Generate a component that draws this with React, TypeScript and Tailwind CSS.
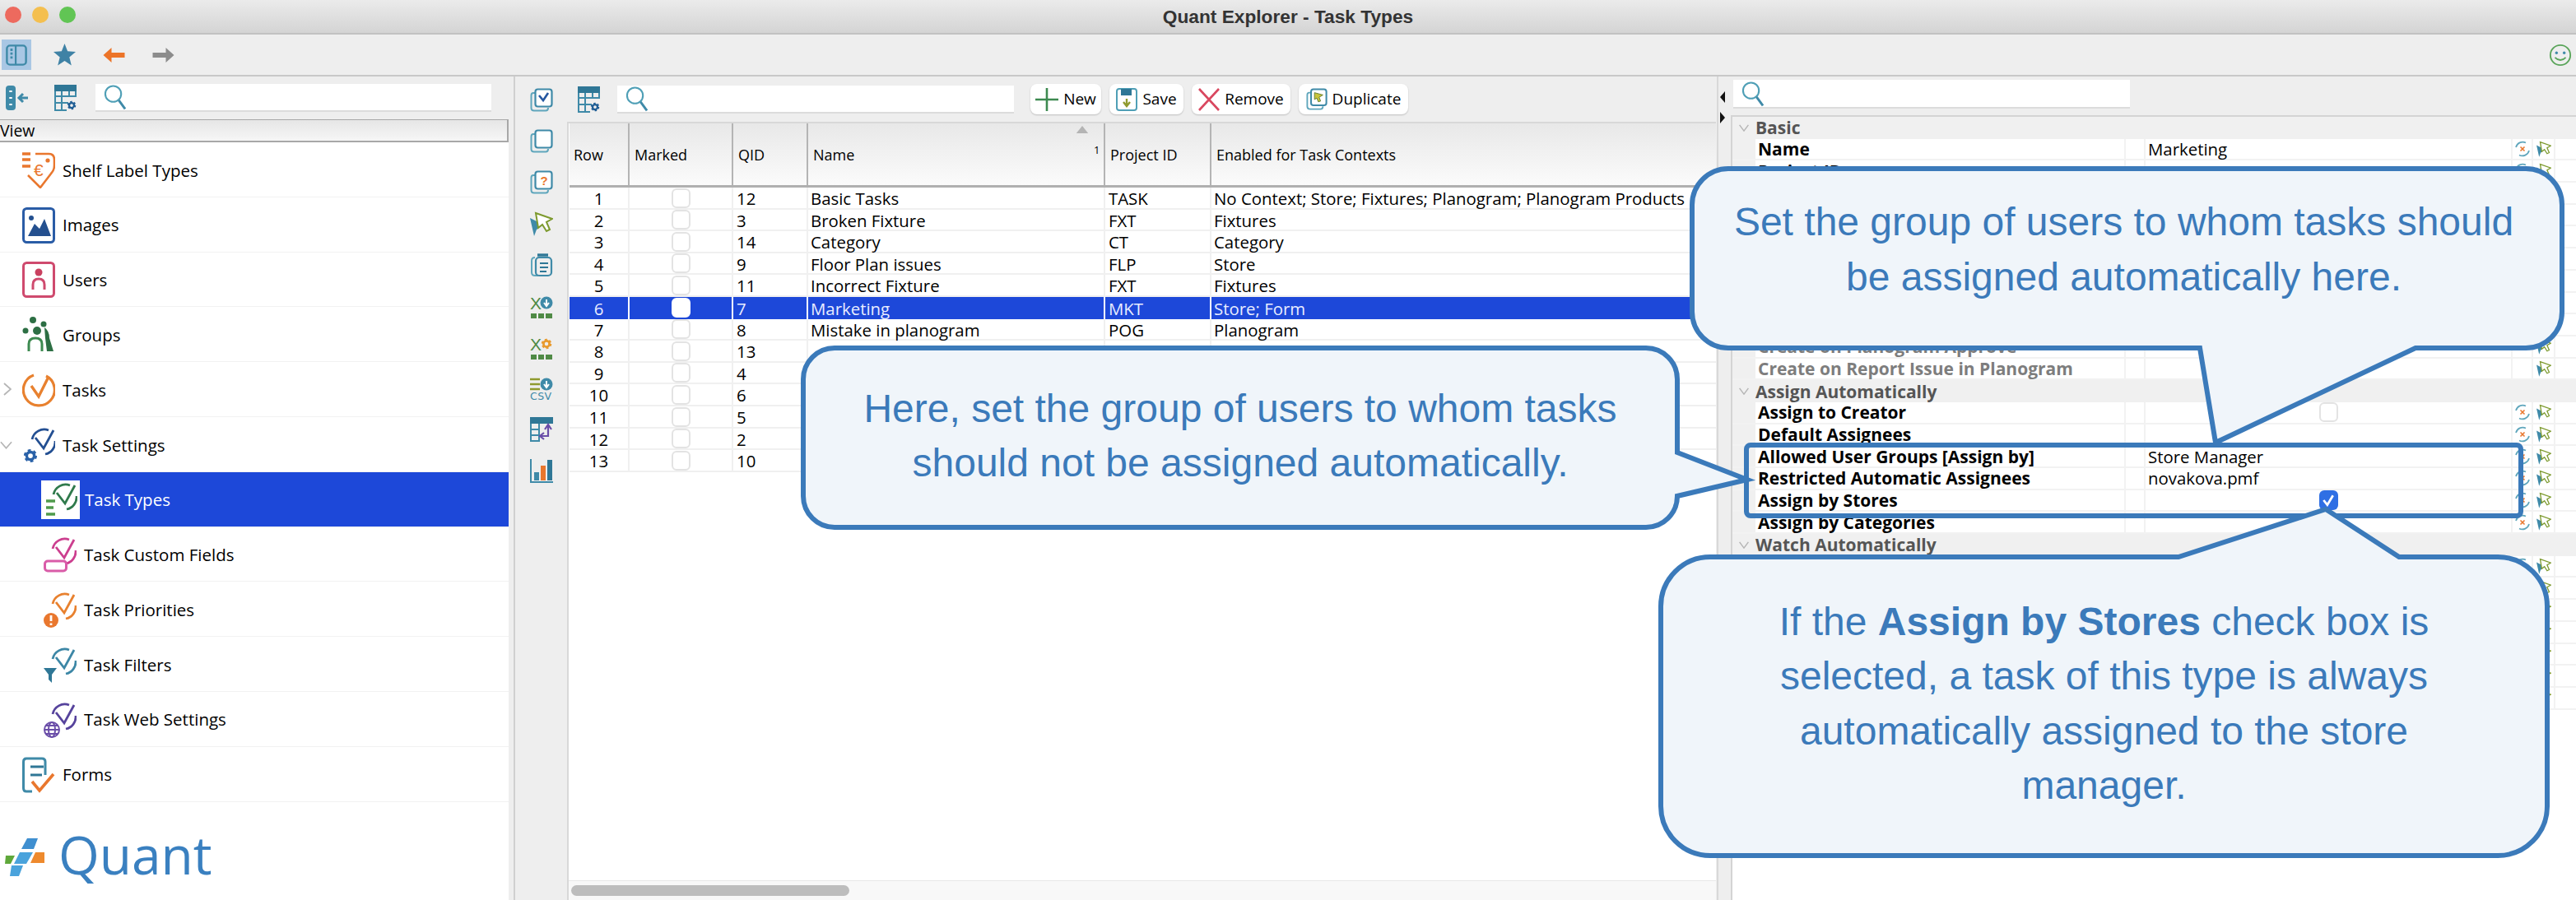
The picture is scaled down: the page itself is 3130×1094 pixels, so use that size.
import * as React from "react";

const TEAL = "#3f8aa8";
const DEEP = "#2f7796";

function ArcCheck({ color, check }: { color: string; check?: string }) {
  return (
    <g fill="none" stroke={color} strokeWidth="2.8">
      <path d="M11 15 A15 15 0 0 1 31 4" />
      <path d="M39 17 A15 15 0 0 1 27 33" />
      <path d="M15 13 L25 26 L37 4" stroke={check ?? color} />
    </g>
  );
}

function Gear({ cx, cy, r, color }: { cx: number; cy: number; r: number; color: string }) {
  return (
    <g fill="none" stroke={color}>
      <circle cx={cx} cy={cy} r={r} strokeWidth={r * 0.75} />
      <circle cx={cx} cy={cy} r={r * 1.45} strokeWidth={r * 0.6} strokeDasharray={`${r * 0.8} ${r * 0.72}`} />
    </g>
  );
}

function TreeIcon({ name }: { name: string }) {
  return (
    <svg viewBox="0 0 40 44" className="w-[40px] h-[44px] flex-none">
      {name === "shelf" && (
        <g fill="none" stroke="#e9772e" strokeWidth="2.6">
          <path d="M0 2 H10 M0 9 H10 M0 17 H10" strokeWidth="3.4" />
          <path d="M16 2 H32 Q39 2 39 9 V16 Q39 22 35 26 L22 43 L7 28" />
          <circle cx="31" cy="10" r="2.6" fill="#e9772e" stroke="none" />
          <text x="14" y="29" fontSize="21" fontFamily="Liberation Sans, sans-serif" fill="#e9772e" stroke="none">€</text>
        </g>
      )}
      {name === "images" && (
        <g>
          <rect x="1.5" y="1.5" width="37" height="41" rx="4" fill="none" stroke="#2a5ca6" strokeWidth="3" />
          <circle cx="11" cy="13" r="3" fill="#24508f" />
          <path d="M7 35 L15 20 L21 26 L27 14 L35 35 Z" fill="#24508f" />
        </g>
      )}
      {name === "users" && (
        <g>
          <rect x="1.5" y="1.5" width="37" height="41" rx="4" fill="none" stroke="#cf4a6e" strokeWidth="3" />
          <circle cx="20" cy="13" r="4.5" fill="#c9405f" />
          <path d="M13 34 V28 Q13 21 20 21 Q27 21 27 28 V34" fill="none" stroke="#cf4a6e" strokeWidth="3" />
        </g>
      )}
      {name === "groups" && (
        <g>
          <circle cx="13" cy="4" r="4" fill="#2d6f44" />
          <circle cx="4" cy="17" r="3.5" fill="#2d6f44" />
          <circle cx="18" cy="17" r="5" fill="#2d6f44" />
          <circle cx="26" cy="9" r="3.5" fill="#2d6f44" />
          <path d="M8 42 V33 Q8 26 16 26 Q24 26 24 33 V42" fill="none" stroke="#3d8a50" strokeWidth="3" />
          <path d="M27 13 Q33 17 33 26 L38 42 H30 L28 26 Z" fill="#2d6f44" />
        </g>
      )}
      {name === "tasks" && (
        <g fill="none" stroke="#e8812f" strokeWidth="3.2">
          <path d="M14 4 A19 19 0 1 0 29 5" />
          <path d="M11 17 L20 30 L32 6" strokeWidth="3.4" />
        </g>
      )}
      {name === "settings" && (
        <g transform="translate(1 0)">
          <ArcCheck color="#234f92" />
          <Gear cx={9} cy={35} r={4.6} color="#2a62a8" />
        </g>
      )}
      {name === "types" && (
        <g>
          <ArcCheck color="#2f7a4c" />
          <path d="M2 23 H13 M2 31 H11 M2 39 H13" stroke="#4f9a4c" strokeWidth="3.6" />
        </g>
      )}
      {name === "custom" && (
        <g>
          <ArcCheck color="#cc3f8f" />
          <rect x="1.5" y="30" width="26" height="12" rx="3.5" fill="#fff" stroke="#d95ca8" strokeWidth="3" />
        </g>
      )}
      {name === "priorities" && (
        <g>
          <ArcCheck color="#e8812f" />
          <circle cx="9" cy="35" r="9" fill="#e9772e" />
          <path d="M9 29 V36 M9 38.5 V41" stroke="#fff" strokeWidth="2.8" />
        </g>
      )}
      {name === "filters" && (
        <g>
          <ArcCheck color="#3d87a6" />
          <path d="M0 26 H16 L10 34 V44 L6 40 V34 Z" fill="#2f7796" />
        </g>
      )}
      {name === "web" && (
        <g>
          <ArcCheck color="#56439c" />
          <g fill="#fff" stroke="#6a4da8" strokeWidth="2">
            <circle cx="10" cy="34" r="9" />
            <ellipse cx="10" cy="34" rx="4" ry="9" />
            <path d="M1 34 H19 M2 29 H18 M2 39 H18" />
          </g>
        </g>
      )}
      {name === "forms" && (
        <g fill="none">
          <path d="M28 22 V6 Q28 2 24 2 H5 Q1.5 2 1.5 6 V38 Q1.5 42 5 42 H12" stroke="#3f8aa8" strokeWidth="3" />
          <path d="M10 12 H26 M10 22 H24" stroke="#2f7796" strokeWidth="3" />
          <path d="M12 30 L21 41 L38 21" stroke="#e9772e" strokeWidth="3.6" />
        </g>
      )}
    </svg>
  );
}

function Search() {
  return (
    <svg viewBox="0 0 28 32" className="w-[27px] h-[32px] flex-none">
      <g fill="none">
        <circle cx="12" cy="12" r="10" stroke="#4f9fb6" strokeWidth="2.2" />
        <path d="M19 20 L27 31" stroke="#3f8aa8" strokeWidth="3" />
      </g>
    </svg>
  );
}

function TableGear() {
  return (
    <svg viewBox="0 0 28 32" className="w-[28px] h-[32px] flex-none">
      <rect x="0" y="0" width="27" height="8" fill="#2f7796" />
      <path d="M1 8 V31 H15 M1 14 H26 M1 22 H17 M9 8 V31 M18 8 V15 M26 8 V15" fill="none" stroke="#3f8aa8" strokeWidth="2" />
      <Gear cx={21} cy={25} r={3} color="#1f5d94" />
    </svg>
  );
}

function CopyBox({ children }: { children?: React.ReactNode }) {
  return (
    <g fill="none">
      <path d="M6 6 H4 Q1.5 6 1.5 9 V24 Q1.5 27.5 5 27.5 H19 Q22 27.5 22 24" stroke="#5fa6bc" strokeWidth="2" />
      <rect x="6.5" y="1.5" width="20" height="21" rx="3" stroke={TEAL} strokeWidth="2.2" fill="#fff" />
      {children}
    </g>
  );
}

function Cursor({ className }: { className: string }) {
  return (
    <svg viewBox="0 0 28 30" className={className}>
      <path d="M0 8 L16 16 L8 22 L5 30 Z" fill="#3f8aa8" />
      <path d="M7 2 L27 9 L20 13 L24 22 L20 24 L15 16 L10 20 Z" fill="#fff" stroke="#7d9a2e" strokeWidth="2" />
    </svg>
  );
}

function Squares() {
  return <path d="M1 24 H8 V30 H1 Z M10 24 H17 V30 H10 Z M19 24 H27 V30 H19 Z" fill="#4f8a45" />;
}

function DownDisc({ x, y }: { x: number; y: number }) {
  return (
    <g>
      <circle cx={x} cy={y} r="7.5" fill={TEAL} />
      <path d={`M${x} ${y - 4} V${y + 3} M${x - 3} ${y} L${x} ${y + 4} L${x + 3} ${y}`} stroke="#fff" strokeWidth="2" fill="none" />
    </g>
  );
}

function RailIcon({ name }: { name: string }) {
  if (name === "flag") return <Cursor className="w-[28px] h-[30px] flex-none" />;
  return (
    <svg viewBox="0 0 28 30" className="w-[28px] h-[30px] flex-none overflow-visible">
      {name === "check" && (
        <CopyBox>
          <path d="M11 9 L16 15 L22 6" stroke="#2557a0" strokeWidth="2.6" />
        </CopyBox>
      )}
      {name === "copy" && <CopyBox />}
      {name === "question" && (
        <CopyBox>
          <text x="12.5" y="18" fontSize="15" fontWeight="700" fontFamily="Liberation Sans, sans-serif" fill="#e9772e">?</text>
        </CopyBox>
      )}
      {name === "clip" && (
        <g fill="none">
          <path d="M6 6 Q2 6 2 10 V24 Q2 28 6 28 H10" stroke="#5fa6bc" strokeWidth="2" />
          <rect x="7" y="6" width="19" height="22" rx="4" stroke={TEAL} strokeWidth="2.2" />
          <path d="M9 3 H22" stroke="#2f7796" strokeWidth="3.4" />
          <path d="M12 13 H22 M12 18 H22 M12 23 H20" stroke={DEEP} strokeWidth="2" />
        </g>
      )}
      {name === "xdown" && (
        <g>
          <text x="0" y="19" fontSize="21" fontFamily="Liberation Sans, sans-serif" fill="#4f8a45">X</text>
          <DownDisc x={20} y={11} />
          <Squares />
        </g>
      )}
      {name === "xgear" && (
        <g>
          <text x="0" y="19" fontSize="21" fontFamily="Liberation Sans, sans-serif" fill="#4f8a45">X</text>
          <Gear cx={20} cy={11} r={3.6} color="#e89a2e" />
          <Squares />
        </g>
      )}
      {name === "csv" && (
        <g>
          <path d="M0 4 H12 M0 10 H12 M0 16 H12" stroke="#8f9a2e" strokeWidth="2.6" />
          <DownDisc x={20} y={10} />
          <text x="0" y="29" fontSize="12.5" fontFamily="DejaVu Sans, sans-serif" letterSpacing="0.4" fill="#3f8aa8">CSV</text>
        </g>
      )}
      {name === "swap" && (
        <g fill="none">
          <rect x="0" y="0" width="28" height="8" fill={DEEP} />
          <path d="M1 8 V29 H11 V8 M1 15 H11 M1 22 H11" stroke={TEAL} strokeWidth="2" />
          <path d="M22 10 V23 H13 M18 15 L22 9 L26 15 M17 19 L12 23 L17 27" stroke="#6a4da8" strokeWidth="2.2" />
        </g>
      )}
      {name === "chart" && (
        <g>
          <path d="M1 1 V29 H28" fill="none" stroke={TEAL} strokeWidth="2" />
          <rect x="5" y="17" width="6" height="10" fill={TEAL} />
          <rect x="13" y="9" width="6" height="18" fill="#e9772e" />
          <rect x="21" y="2" width="6" height="25" fill={DEEP} />
        </g>
      )}
    </svg>
  );
}

function Revert() {
  return (
    <svg viewBox="0 0 18 24" className="w-[18px] h-[24px]">
      <g fill="none" stroke="#5fa6bc" strokeWidth="1.7">
        <path d="M1 10 A8.5 8.5 0 0 1 13 4.5" />
        <path d="M17 14 A8.5 8.5 0 0 1 5 19.5" />
      </g>
      <path d="M6.5 9.5 L11.5 14.5 M11.5 9.5 L6.5 14.5" stroke="#e9772e" strokeWidth="1.6" />
    </svg>
  );
}

function SmallCheck({ active }: { active?: boolean }) {
  return (
    <div className={`w-[23px] h-[24px] rounded-[6px] border-2 ${active ? "bg-white border-white" : "bg-white border-[#e3e3e3]"}`} />
  );
}

const TREE = [
  { icon: "shelf", label: "Shelf Label Types" },
  { icon: "images", label: "Images" },
  { icon: "users", label: "Users" },
  { icon: "groups", label: "Groups" },
  { icon: "tasks", label: "Tasks", chevron: "right" },
  { icon: "settings", label: "Task Settings", chevron: "down" },
  { icon: "types", label: "Task Types", child: true, selected: true },
  { icon: "custom", label: "Task Custom Fields", child: true },
  { icon: "priorities", label: "Task Priorities", child: true },
  { icon: "filters", label: "Task Filters", child: true },
  { icon: "web", label: "Task Web Settings", child: true },
  { icon: "forms", label: "Forms" },
];

const RAIL = ["check", "copy", "question", "flag", "clip", "xdown", "xgear", "csv", "swap", "chart"];

const ROWS = [
  ["1", "12", "Basic Tasks", "TASK", "No Context; Store; Fixtures; Planogram; Planogram Products"],
  ["2", "3", "Broken Fixture", "FXT", "Fixtures"],
  ["3", "14", "Category", "CT", "Category"],
  ["4", "9", "Floor Plan issues", "FLP", "Store"],
  ["5", "11", "Incorrect Fixture", "FXT", "Fixtures"],
  ["6", "7", "Marketing", "MKT", "Store; Form"],
  ["7", "8", "Mistake in planogram", "POG", "Planogram"],
  ["8", "13", "", "", ""],
  ["9", "4", "", "", ""],
  ["10", "6", "", "", ""],
  ["11", "5", "", "", ""],
  ["12", "2", "", "", ""],
  ["13", "10", "", "", ""],
];

type Prop = { label?: string; value?: string; group?: boolean; muted?: boolean; box?: "on" | "off"; noRevert?: boolean };

const PROPS: Prop[] = [
  { label: "Basic", group: true },
  { label: "Name", value: "Marketing" },
  { label: "Project ID", value: "MKT" },
  {}, {}, {}, {}, {}, {}, {},
  { label: "Create on Planogram Approve", muted: true, noRevert: true },
  { label: "Create on Report Issue in Planogram", muted: true, noRevert: true },
  { label: "Assign Automatically", group: true },
  { label: "Assign to Creator", box: "off" },
  { label: "Default Assignees" },
  { label: "Allowed User Groups [Assign by]", value: "Store Manager" },
  { label: "Restricted Automatic Assignees", value: "novakova.pmf" },
  { label: "Assign by Stores", box: "on" },
  { label: "Assign by Categories" },
  { label: "Watch Automatically", group: true },
  {}, {}, {}, {}, {}, {}, {},
];

function Callout({ className, path, children }: { className: string; path: string; children: React.ReactNode }) {
  return (
    <div className={`absolute ${className}`}>
      <svg className="absolute inset-0 w-full h-full overflow-visible">
        <path d={path} fill="#f0f5fa" stroke="#3b7aba" strokeWidth="6" strokeLinejoin="miter" />
      </svg>
      <div className="relative h-full flex items-center justify-center text-center font-['Liberation_Sans',Arial,sans-serif] text-[48px] leading-[66.5px] text-[#3b7aba]">
        {children}
      </div>
    </div>
  );
}

export default function App() {
  return (
    <div className="relative w-[3130px] h-[1094px] overflow-hidden flex flex-col bg-[#eeeeee] text-black font-['Open_Sans',sans-serif]">
      {/* title bar */}
      <div className="relative h-[42px] flex-none flex items-center justify-center border-b-2 border-[#c2c2c2] bg-gradient-to-b from-[#ebebeb] to-[#d4d4d4]">
        <div className="absolute left-[6px] top-[8px] flex gap-[13px]">
          <div className="w-[20px] h-[20px] rounded-full bg-[#ed6a5e]" />
          <div className="w-[20px] h-[20px] rounded-full bg-[#f4bf4f]" />
          <div className="w-[20px] h-[20px] rounded-full bg-[#61c554]" />
        </div>
        <span className="font-['Liberation_Sans',Arial,sans-serif] font-bold text-[22.7px] leading-none text-[#333333]">Quant Explorer - Task Types</span>
      </div>

      {/* window toolbar */}
      <div className="h-[51px] flex-none flex items-center border-b-2 border-[#c8c8c8] pl-[2px] pr-[5px]">
        <div className="w-[36px] h-[37px] flex items-center justify-center bg-[#a9c7e4]">
          <svg viewBox="0 0 28 28" className="w-[26px] h-[26px]">
            <rect x="1.5" y="1.5" width="25" height="25" rx="4" fill="none" stroke="#3f8aa8" strokeWidth="2.6" />
            <path d="M13 2 V26" stroke="#3f8aa8" strokeWidth="2.4" />
            <path d="M6 7 H9 M6 12 H9 M6 17 H9" stroke="#3f8aa8" strokeWidth="3" />
          </svg>
        </div>
        <svg viewBox="0 0 26 26" className="w-[27px] h-[27px] ml-[27px]">
          <path d="M13 0 L16.5 9 L26 9.6 L18.6 15.8 L21 25.5 L13 20.2 L5 25.5 L7.4 15.8 L0 9.6 L9.5 9 Z" fill="#3f82a5" />
        </svg>
        <svg viewBox="0 0 26 18" className="w-[27px] h-[18px] ml-[33px]">
          <path d="M0 9 L10 0 V6 H26 V12 H10 V18 Z" fill="#ec7428" />
        </svg>
        <svg viewBox="0 0 26 18" className="w-[27px] h-[18px] ml-[33px]">
          <path d="M26 9 L16 0 V6 H0 V12 H16 V18 Z" fill="#8c8c8c" />
        </svg>
        <svg viewBox="0 0 30 30" className="w-[28px] h-[28px] ml-auto">
          <circle cx="15" cy="15" r="13" fill="none" stroke="#5aa55a" strokeWidth="2" />
          <circle cx="10" cy="12" r="1.8" fill="#3f8aa8" />
          <circle cx="20" cy="12" r="1.8" fill="#3f8aa8" />
          <path d="M8 18 Q15 25 22 18" fill="none" stroke="#5aa55a" strokeWidth="2" />
        </svg>
      </div>

      <div className="flex-1 flex min-h-0">
        {/* navigator */}
        <div className="w-[626px] flex-none flex flex-col border-r-2 border-[#d0d0d0]">
          <div className="h-[52px] flex-none flex items-center pl-[7px]">
            <svg viewBox="0 0 28 30" className="w-[28px] h-[30px] flex-none">
              <rect x="0" y="0" width="12" height="30" rx="4" fill="#3f8aa8" />
              <path d="M6 6 V8 M6 14 V16 M6 22 V24" stroke="#fff" strokeWidth="3.4" />
              <path d="M16 15 H27 M21 10 L16 15 L21 20" fill="none" stroke="#3f8aa8" strokeWidth="3" />
            </svg>
            <div className="ml-[31px]"><TableGear /></div>
            <div className="ml-[22px] w-[481px] h-[34px] bg-white border-b-2 border-[#dcdcdc] flex items-center pl-[10px]"><Search /></div>
          </div>
          <div className="w-[618px] h-[28px] flex-none flex items-center bg-gradient-to-b from-[#e6e6e6] to-[#f6f6f6] border-t border-r-2 border-b-2 border-[#a8a8a8] text-[19.4px] leading-none">View</div>
          <div className="w-[618px] flex-1 bg-white flex flex-col">
            {TREE.map((item) => (
              <div
                key={item.label}
                className={`relative h-[66.8px] flex-none flex items-center border-b border-[#f2f2f2] text-[20.5px] pt-[2px] ${
                  item.selected ? "bg-[#1d48d9] text-white" : ""
                } ${item.child ? "pl-[53px]" : "pl-[27px]"}`}
              >
                {item.chevron === "right" && (
                  <svg viewBox="0 0 10 16" className="absolute left-[4px] top-[25px] w-[10px] h-[16px]">
                    <path d="M1 1 L9 8 L1 15" fill="none" stroke="#b5b5b5" strokeWidth="1.8" />
                  </svg>
                )}
                {item.chevron === "down" && (
                  <svg viewBox="0 0 16 10" className="absolute left-[0px] top-[29px] w-[15px] h-[10px]">
                    <path d="M1 1 L8 9 L15 1" fill="none" stroke="#b5b5b5" strokeWidth="1.8" />
                  </svg>
                )}
                <div className={item.selected ? "bg-white w-[47px] h-[47px] -ml-[3px] mr-[6px] flex items-center justify-center" : "mr-[9px]"}>
                  <TreeIcon name={item.icon} />
                </div>
                {item.label}
              </div>
            ))}
            <div className="flex items-center mt-[36px] pl-[6px]">
              <svg viewBox="0 0 48 48" className="w-[48px] h-[48px] flex-none">
                <path d="M27 2 H40 L35 15 H20 Z" fill="#3f8fd0" />
                <path d="M18 19 H34 L26 33 H11 Z" fill="#4aa3dc" />
                <path d="M8 35 H22 L17 48 H6 Z" fill="#4aa3dc" />
                <path d="M1 23 H12 L7 33 H0 Z" fill="#5fa83a" />
                <path d="M37 19 H48 V32 H31 Z" fill="#ee8a2e" />
              </svg>
              <span className="ml-[17px] text-[64px] leading-[64px] text-[#3a80c0] -mt-[4px]">Quant</span>
            </div>
          </div>
        </div>

        {/* task type table */}
        <div className="w-[1460px] flex-none flex">
          <div className="w-[63px] flex-none flex flex-col items-center pt-[14px] gap-[20px]">
            {RAIL.map((name) => (
              <RailIcon key={name} name={name} />
            ))}
          </div>
          <div className="w-[1396px] flex-none flex flex-col">
            <div className="h-[55px] flex-none flex items-center pl-[13px]">
              <TableGear />
              <div className="ml-[20px] w-[482px] h-[34px] bg-white border-b-2 border-[#dcdcdc] flex items-center pl-[10px]"><Search /></div>
              <div className="ml-[20px] flex gap-[10px] text-[19px] leading-none">
                <button className="w-[86px] h-[37px] rounded-[8px] bg-white shadow-[0_1px_2px_rgba(0,0,0,0.2)] flex items-center justify-center gap-[6px]">
                  <svg viewBox="0 0 28 28" className="w-[28px] h-[28px]"><path d="M14 0 V28 M0 14 H28" stroke="#3d8a50" strokeWidth="2.6" /></svg>
                  New
                </button>
                <button className="w-[90px] h-[37px] rounded-[8px] bg-white shadow-[0_1px_2px_rgba(0,0,0,0.2)] flex items-center justify-center gap-[6px]">
                  <svg viewBox="0 0 26 28" className="w-[26px] h-[28px]">
                    <rect x="1" y="1" width="24" height="26" rx="3" fill="none" stroke="#4f9fb6" strokeWidth="2" />
                    <rect x="6" y="1" width="13" height="8" fill="#2f7796" />
                    <path d="M13 13 V20 M9 17 L13 22 L17 17" fill="none" stroke="#8f9a2e" strokeWidth="2.4" />
                  </svg>
                  Save
                </button>
                <button className="w-[120px] h-[37px] rounded-[8px] bg-white shadow-[0_1px_2px_rgba(0,0,0,0.2)] flex items-center justify-center gap-[6px]">
                  <svg viewBox="0 0 26 28" className="w-[26px] h-[28px]"><path d="M1 1 L25 27 M25 1 L1 27" stroke="#d9475f" strokeWidth="2.6" /></svg>
                  Remove
                </button>
                <button className="w-[133px] h-[37px] rounded-[8px] bg-white shadow-[0_1px_2px_rgba(0,0,0,0.2)] flex items-center justify-center gap-[6px]">
                  <svg viewBox="0 0 28 30" className="w-[26px] h-[28px]">
                    <path d="M6 6 H4 Q1.5 6 1.5 9 V24 Q1.5 27.5 5 27.5 H19 Q22 27.5 22 24" fill="none" stroke="#5fa6bc" strokeWidth="2" />
                    <rect x="6.5" y="1.5" width="20" height="21" rx="3" fill="#fff" stroke={TEAL} strokeWidth="2.2" />
                    <path d="M11 6 L22 9 L17 12 L19 17 L16 18 L14 13 L11 15 Z" fill="#c9c43a" stroke="#5f7a2e" strokeWidth="1" />
                  </svg>
                  Duplicate
                </button>
              </div>
            </div>
            <div className="flex-1 min-h-0 flex flex-col bg-white border-t-2 border-l-2 border-[#d8d8d8]">
              <div className="flex-1 min-h-0 pl-[1px]">
                <div className="relative grid grid-cols-[73px_126px_91px_361px_129px_613px] h-[78px] bg-gradient-to-b from-[#e8e8e8] to-[#fbfbfb] border-b-[3px] border-[#b0b0b0] text-[18px]">
                  {["Row", "Marked", "QID", "Name", "Project ID", "Enabled for Task Contexts"].map((h, i) => (
                    <div key={h} className={`flex items-center pt-[1px] ${i === 0 ? "pl-[5px]" : "pl-[6px]"} ${i < 5 ? "border-r-2 border-[#b4b4b4]" : ""}`}>
                      {h}
                    </div>
                  ))}
                  <svg viewBox="0 0 16 10" className="absolute left-[615px] top-[3px] w-[16px] h-[9px]"><path d="M0 10 L8 0 L16 10 Z" fill="#b4b4b4" /></svg>
                  <span className="absolute left-[637px] top-[26px] text-[13px] leading-none">1</span>
                </div>
                {ROWS.map((r, i) => {
                  const sel = i === 5;
                  const lineCls = sel ? "border-r-2 border-white" : "border-r-2 border-[#f0f0f0]";
                  return (
                    <div
                      key={r[0]}
                      className={`grid grid-cols-[73px_126px_91px_361px_129px_613px] h-[26.62px] text-[20.4px] leading-[24px] whitespace-nowrap ${
                        sel ? "bg-[#1d48d9] text-[#e8ecff]" : "border-b-2 border-[#f0f0f0]"
                      }`}
                    >
                      <div className={`flex items-center justify-center pt-[1px] ${lineCls}`}>{r[0]}</div>
                      <div className={`flex items-center justify-center ${lineCls}`}><SmallCheck active={sel} /></div>
                      <div className={`flex items-center pl-[4px] pt-[1px] ${lineCls}`}>{r[1]}</div>
                      <div className={`flex items-center pl-[3px] pt-[1px] ${lineCls}`}>{r[2]}</div>
                      <div className={`flex items-center pl-[4px] pt-[1px] ${lineCls}`}>{r[3]}</div>
                      <div className="flex items-center pl-[3px] pt-[1px]">{r[4]}</div>
                    </div>
                  );
                })}
              </div>
              <div className="h-[24px] flex-none flex items-center pl-[3px] bg-[#f8f8f8] border-t border-[#e8e8e8]">
                <div className="w-[338px] h-[13px] rounded-full bg-[#bdbdbd]" />
              </div>
            </div>
          </div>
        </div>

        {/* property sheet */}
        <div className="flex-1 min-w-0 flex">
          <div className="w-[17px] flex-none relative border-l-2 border-[#d8d8d8]">
            <svg viewBox="0 0 6 14" className="absolute left-[2px] top-[18px] w-[6px] h-[14px]"><path d="M6 0 V14 L0 7 Z" fill="#111" /></svg>
            <svg viewBox="0 0 6 14" className="absolute left-[2px] top-[43px] w-[6px] h-[14px]"><path d="M0 0 V14 L6 7 Z" fill="#111" /></svg>
          </div>
          <div className="flex-1 min-w-0 flex flex-col">
            <div className="h-[47px] flex-none flex items-start pt-[4px] pl-[3px]">
              <div className="w-[482px] h-[35px] bg-white border-b-2 border-[#dcdcdc] flex items-center pl-[10px]"><Search /></div>
            </div>
            <div className="flex-1 min-h-0 bg-white border-t-2 border-l-2 border-[#d4d4d4] text-[21px] leading-[24px] whitespace-nowrap">
              {PROPS.map((p, i) =>
                p.group ? (
                  <div key={i} className="h-[26.7px] flex items-center bg-[#f0f0f0] text-[#555] font-bold">
                    <svg viewBox="0 0 14 10" className="w-[14px] h-[9px] ml-[7px] mr-[7px]"><path d="M1 1 L7 9 L13 1" fill="none" stroke="#b5b5b5" strokeWidth="1.6" /></svg>
                    {p.label}
                  </div>
                ) : (
                  <div key={i} className="grid grid-cols-[28px_448px_26px_444px_27px_27px_1fr] h-[26.7px] border-b-2 border-[#f2f2f2]">
                    <div className="bg-[#f0f0f0]" />
                    <div className={`flex items-center pl-[3px] font-bold ${p.muted ? "text-[#7d7d7d]" : ""}`}>{p.label}</div>
                    <div className="border-l-2 border-r-2 border-[#f2f2f2]" />
                    <div className="flex items-center justify-center">
                      {p.value && <span className="w-full pl-[3px] text-[20.4px]">{p.value}</span>}
                      {p.box === "off" && <div className="w-[23px] h-[24px] rounded-[6px] border-2 border-[#e3e3e3] bg-white" />}
                      {p.box === "on" && (
                        <div className="w-[23px] h-[24px] rounded-[6px] bg-[#2f6fe4] flex items-center justify-center">
                          <svg viewBox="0 0 14 14" className="w-[16px] h-[16px]"><path d="M2 7 L6 12 L12 2" fill="none" stroke="#fff" strokeWidth="2.4" /></svg>
                        </div>
                      )}
                    </div>
                    <div className="flex items-center justify-center border-l-2 border-r-2 border-[#f2f2f2]">{!p.noRevert && <Revert />}</div>
                    <div className="flex items-center justify-center border-r-2 border-[#f2f2f2]"><Cursor className="w-[18px] h-[22px]" /></div>
                    <div />
                  </div>
                )
              )}
            </div>
          </div>
        </div>
      </div>

      {/* annotation overlays */}
      <div className="absolute left-[2119px] top-[538px] w-[947px] h-[92px] border-[6px] border-[#3b7aba] rounded-[8px]" />
      <Callout
        className="left-[2056px] top-[205px] w-[1057px] h-[218px] pb-[21px] pr-[8px]"
        path="M44 0 H1013 A44 44 0 0 1 1057 44 V174 A44 44 0 0 1 1013 218 H879 L636 333 L617 218 H44 A44 44 0 0 1 0 174 V44 A44 44 0 0 1 44 0 Z"
      >
        <p>Set the group of users to whom tasks should<br />be assigned automatically here.</p>
      </Callout>
      <Callout
        className="left-[976px] top-[423px] w-[1062px] h-[218px] pb-[4px]"
        path="M38 0 H1024 A38 38 0 0 1 1062 38 V127 L1147 160 L1062 180 A38 38 0 0 1 1024 218 H38 A38 38 0 0 1 0 180 V38 A38 38 0 0 1 38 0 Z"
      >
        <p>Here, set the group of users to whom tasks<br />should not be assigned automatically.</p>
      </Callout>
      <Callout
        className="left-[2018px] top-[677px] w-[1077px] h-[363px] pb-[6px]"
        path="M60 0 H629 L808 -58 L897 0 H1017 A60 60 0 0 1 1077 60 V303 A60 60 0 0 1 1017 363 H60 A60 60 0 0 1 0 303 V60 A60 60 0 0 1 60 0 Z"
      >
        <p>
          If the <b>Assign by Stores</b> check box is<br />
          selected, a task of this type is always<br />
          automatically assigned to the store<br />
          manager.
        </p>
      </Callout>
    </div>
  );
}
